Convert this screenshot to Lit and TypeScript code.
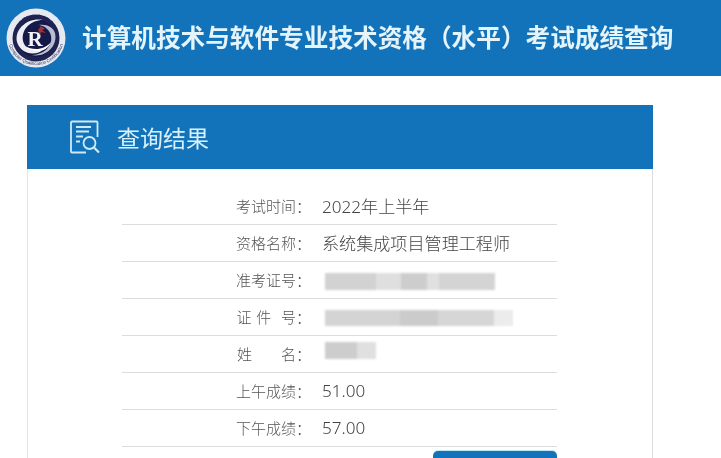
import { LitElement, html, css, svg } from "lit";
import { customElement } from "lit/decorators.js";

type Row = { label: string; value?: string; mask?: string };

const rows: Row[] = [
  { label: "考试时间：", value: "2022年上半年" },
  { label: "资格名称：", value: "系统集成项目管理工程师" },
  { label: "准考证号：", mask: "w-a" },
  { label: "证\u00a0件\u00a0\u00a0号：", mask: "w-b" },
  { label: "姓\u00a0\u00a0\u00a0\u00a0\u00a0\u00a0名：", mask: "w-c" },
  { label: "上午成绩：", value: "51.00" },
  { label: "下午成绩：", value: "57.00" },
];

const logo = svg`
  <svg class="logo" viewBox="0 0 60 60" width="60" height="60" aria-hidden="true">
    <defs>
      <path id="ringTop" d="M9.500 30a20.500 20.500 0 0 1 41 0"></path>
      <path id="ringBottom" d="M4.300 18a28 28 0 1 0 51.400 0"></path>
    </defs>
    <circle cx="30" cy="30" r="29.500" fill="#e6e9ef"></circle>
    <circle cx="30" cy="30" r="23.500" fill="#20224f"></circle>
    <circle cx="30" cy="30" r="19" fill="#161a48"></circle>
    <path d="M11 34C8 21 22 9 37 12c-12 0-22 9-20 21 2 8 11 12 20 9-9 7-23 3-26-8z" fill="#eceef4"></path>
    <path d="M49 25c3 13-9 25-24 22 12 0 22-8 20-19-1-6-6-10-12-11 8-1 14 2 16 8z" fill="#b9bdd4"></path>
    <path d="M19 38c8 5 20 4 26-4-3 10-19 13-26 4z" fill="#fff"></path>
    <text x="29" y="38" text-anchor="middle" class="r">R</text>
    <path d="M35 18l4 3-3 1 4 3-5-1-1 3-2-5z" fill="#a8312f"></path>
    <text class="ring-cn" fill="#20245a"><textPath href="#ringTop" startOffset="50%" text-anchor="middle">中国计算机职业技术</textPath></text>
    <text class="ring-en" fill="#2f3566"><textPath href="#ringBottom" startOffset="50%" text-anchor="middle">Computer Qualification Certification</textPath></text>
  </svg>`;

const docIcon = svg`
  <svg class="doc" viewBox="0 0 32 34" width="32" height="34" fill="none" stroke="#cdeaf6" stroke-width="1.800" aria-hidden="true">
    <path d="M16 32.500H2a1 1 0 0 1-1-1V2.500a1 1 0 0 1 1-1H26.500a1 1 0 0 1 1 1V17"></path>
    <path d="M6 7h15M6 11.500h13M6 16.500h7M6 21.500h4"></path>
    <circle cx="19.500" cy="23" r="6"></circle>
    <path d="M24 27.500l5 5" stroke-width="2.200"></path>
  </svg>`;

@customElement("app-root")
export class AppRoot extends LitElement {
  static styles = css`
    :host {
      display: block;
      width: 721px;
      height: 458px;
      overflow: hidden;
      background: #fff;
      font-family: "Noto Sans CJK SC", "Liberation Sans", sans-serif;
      color: #555;
    }
    .top {
      height: 76px;
      background: #1273bb;
      display: flex;
      align-items: center;
      padding-left: 6px;
      box-sizing: border-box;
      gap: 16px;
    }
    .logo { flex: none; margin-top: -1px; filter: blur(0.45px); }
    .logo .r { font: bold 21px "Liberation Serif", serif; fill: #f4f4f8; }
    .logo .ring-cn { font-size: 3.800px; font-weight: 700; }
    .logo .ring-en { font: 4.600px "Liberation Sans", sans-serif; }
    h1 {
      margin: -4px 0 0;
      font-size: 24.65px;
      font-weight: 700;
      color: #e4f4fb;
      white-space: nowrap;
      filter: blur(0.4px);
    }
    .content { padding: 29px 68px 0 27px; }
    .card {
      border-right: 1px solid #dcdcdc;
      border-left: 1px solid #e6e6e6;
      height: 360px;
    }
    .card-head {
      height: 64px;
      margin: 0 -1px;
      background: #1273bb;
      display: flex;
      align-items: center;
      padding-left: 43px;
      gap: 15px;
    }
    .doc { flex: none; }
    h2 {
      margin: 0;
      font-size: 23px;
      font-weight: 400;
      color: #d8f0fa;
      filter: blur(0.3px);
    }
    .table { margin: 19px 95px 0 94px; }
    .row {
      height: 34px;
      padding-bottom: 2px;
      border-bottom: 1px solid #dcdcdc;
      display: grid;
      grid-template-columns: 189px 1fr;
      column-gap: 11px;
      align-items: center;
    }
    .label {
      font-size: 15px;
      font-weight: 300;
      text-align: right;
      color: #555;
      word-spacing: 1.500px;
      white-space: nowrap;
      filter: blur(0.3px);
    }
    .value {
      font-family: "Noto Sans", "Noto Sans CJK SC", sans-serif;
      font-size: 17.100px;
      font-weight: 300;
      color: #444;
      filter: blur(0.3px);
    }
    .mask { display: block; filter: blur(1.200px); margin-left: 3px; }
    .w-a {
      width: 170px;
      height: 17px;
      margin-top: 4px;
      background: linear-gradient(90deg, #d2d2d2 0 30%, #dfdfdf 30% 45%, #cdcdcd 45% 60%, #e0e0e0 60% 67%, #d4d4d4 67% 100%);
    }
    .w-b {
      width: 188px;
      height: 16px;
      margin-top: 3px;
      background: linear-gradient(90deg, #d4d4d4 0 40%, #cbcbcb 40% 60%, #d6d6d6 60% 90%, #ececec 90% 100%);
    }
    .w-c {
      width: 51px;
      height: 17px;
      margin-top: -6px;
      background: linear-gradient(90deg, #cdcdcd 0 62%, #e0e0e0 62% 100%);
    }
    .btn-row { display: flex; justify-content: flex-end; margin-top: 4px; }
    .btn { width: 124px; height: 30px; border-radius: 5px; background: #1273bb; box-shadow: 0 -1px 0 #bfe8f5; }
  `;

  render() {
    return html`
      <div class="top">
        ${logo}
        <h1>计算机技术与软件专业技术资格（水平）考试成绩查询</h1>
      </div>
      <div class="content">
        <div class="card">
          <div class="card-head">${docIcon}<h2>查询结果</h2></div>
          <div class="table">
            ${rows.map(
              (r) => html`
                <div class="row">
                  <div class="label">${r.label}</div>
                  <div class="value">
                    ${r.value ?? ""}${r.mask ? html`<span class="mask ${r.mask}"></span>` : ""}
                  </div>
                </div>
              `
            )}
            <div class="btn-row"><div class="btn"></div></div>
          </div>
        </div>
      </div>
    `;
  }
}
